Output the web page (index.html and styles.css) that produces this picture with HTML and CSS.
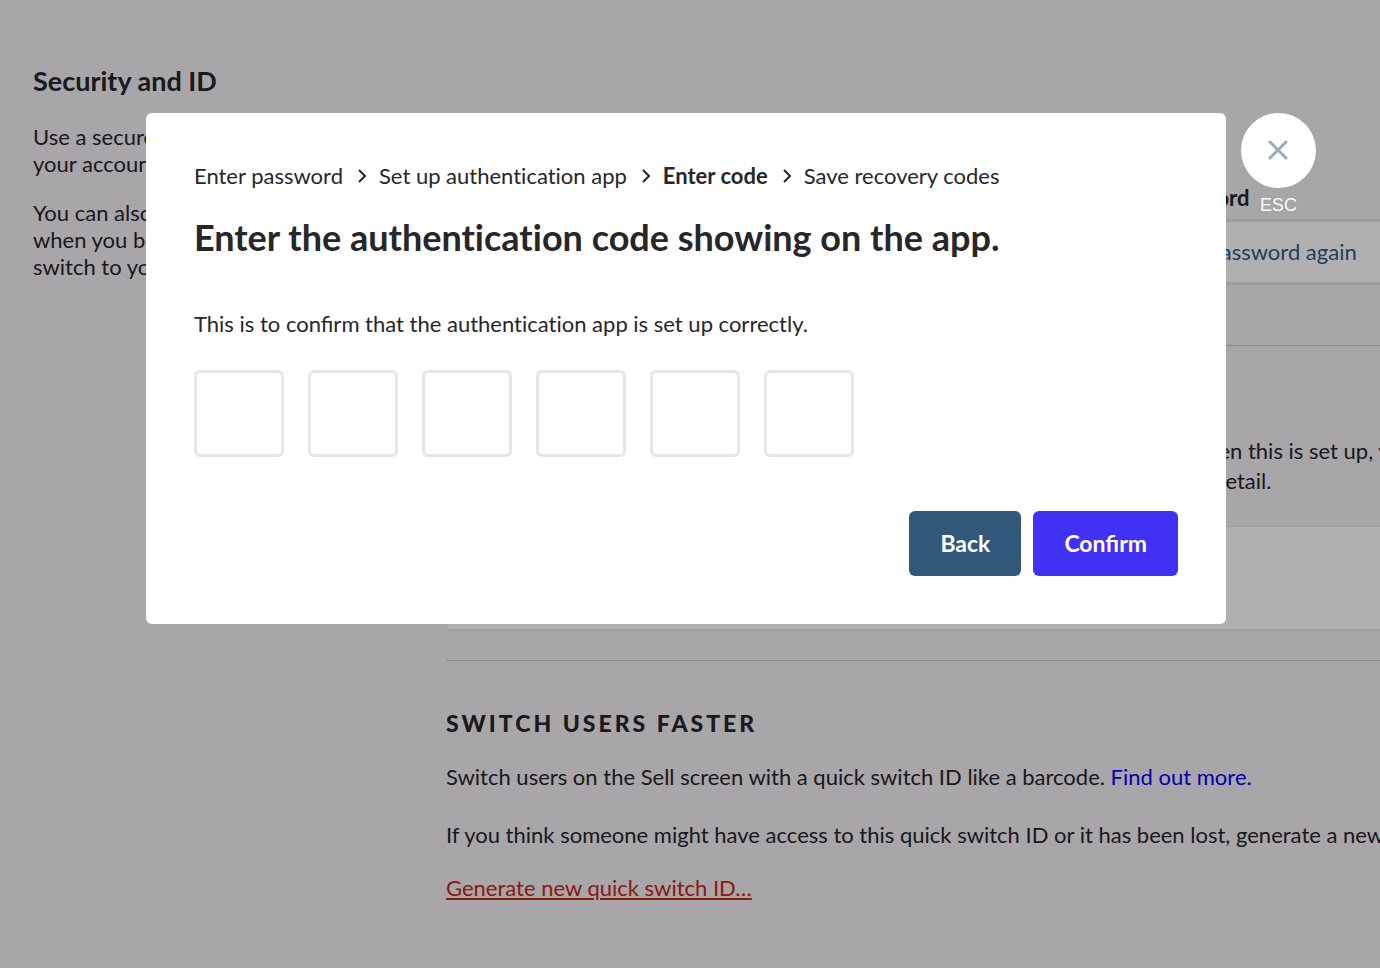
FILE: index.html
```html
<!DOCTYPE html>
<html lang="en">
<head>
<meta charset="utf-8">
<title>Security and ID</title>
<link rel="stylesheet" href="styles.css">
</head>
<body>
<main class="page">
  <section class="intro">
    <h2 class="intro-title">Security and ID</h2>
    <p class="intro-text">Use a secure<br>your account</p>
    <p class="intro-text">You can also<br>when you begin<br>switch to your</p>
  </section>
  <div class="settings">
    <section class="passwords">
      <div class="field">
        <label class="field-label" for="repeat">Repeat password</label>
        <input class="field-input" id="repeat" type="password" placeholder="Enter new password again">
      </div>
    </section>
    <section class="two-factor">
      <p class="text">Protect your user account by adding two-factor authentication to your login. When this is set up, you will be<br>asked for a code each time you log in. Visit our help centre guide to see more in detail.</p>
      <div class="panel"></div>
    </section>
    <section class="switching">
      <h3 class="section-title">Switch users faster</h3>
      <p class="text">Switch users on the Sell screen with a quick switch ID like a barcode. <a class="link" href="#">Find out more.</a></p>
      <p class="text text-spaced">If you think someone might have access to this quick switch ID or it has been lost, generate a new one.</p>
      <a class="danger-link" href="#">Generate new quick switch ID…</a>
    </section>
  </div>
</main>
<div class="overlay">
  <div class="modal" role="dialog" aria-modal="true" aria-labelledby="modal-title">
    <ol class="steps">
      <li class="step">Enter password</li>
      <li class="step"><svg class="chevron" viewBox="0 0 8 14"><path d="M1 1l6 6-6 6"/></svg>Set up authentication app</li>
      <li class="step step-current" aria-current="step"><svg class="chevron" viewBox="0 0 8 14"><path d="M1 1l6 6-6 6"/></svg>Enter code</li>
      <li class="step"><svg class="chevron" viewBox="0 0 8 14"><path d="M1 1l6 6-6 6"/></svg>Save recovery codes</li>
    </ol>
    <h1 class="modal-title" id="modal-title">Enter the authentication code showing on the app.</h1>
    <p class="modal-text">This is to confirm that the <span class="no-ligatures">authentication</span> app is set up correctly.</p>
    <div class="code">
      <input class="digit" aria-label="Digit 1" maxlength="1" inputmode="numeric">
      <input class="digit" aria-label="Digit 2" maxlength="1" inputmode="numeric">
      <input class="digit" aria-label="Digit 3" maxlength="1" inputmode="numeric">
      <input class="digit" aria-label="Digit 4" maxlength="1" inputmode="numeric">
      <input class="digit" aria-label="Digit 5" maxlength="1" inputmode="numeric">
      <input class="digit" aria-label="Digit 6" maxlength="1" inputmode="numeric">
    </div>
    <div class="actions">
      <button class="button button-back" type="button">Back</button>
      <button class="button button-confirm" type="button">Confirm</button>
    </div>
    <div class="close">
      <button class="close-button" type="button" aria-labelledby="close-label"><svg class="close-icon" viewBox="0 0 20 20"><path d="M2 2l16 16M18 2L2 18"/></svg></button>
      <span class="close-label" id="close-label">ESC</span>
    </div>
  </div>
</div>
</body>
</html>
```

FILE: styles.css
```css
* { box-sizing: border-box; }
body {
  margin: 0;
  height: 100vh;
  overflow: hidden;
  background: #f4f1f5;
  color: #27262b;
  font: 22px/30px Lato, sans-serif;
}
h1, h2, h3, p, ol { margin: 0; padding: 0; }

.page {
  display: grid;
  grid-template-columns: 380px 1240px;
  column-gap: 33px;
  padding: 64px 33px 0;
}
.intro-title { font-size: 27px; line-height: 34px; margin-bottom: 25px; }
.intro-text { line-height: 27px; margin-bottom: 22px; }

.passwords {
  display: grid;
  grid-template-columns: 1fr 1fr;
  column-gap: 32px;
  padding: 119px 0 60px;
  border-bottom: 1px solid #cac8cc;
}
.field { grid-column: 2; }
.field-label { display: block; font-weight: 700; margin-bottom: 6px; }
.field-input {
  display: block;
  width: 100%;
  height: 66px;
  padding: 0 20px 2px;
  border: 3px solid #e6e5e8;
  border-radius: 4px;
  background: #fff;
  font: inherit;
}
.field-input::placeholder { color: #305b84; opacity: 1; }

.two-factor { padding: 90px 0 30px; border-bottom: 1px solid #cac8cc; }
.panel { height: 104px; margin-top: 30px; border: 1px solid #e6e5e8; background: #fff; }

.switching { padding-top: 47px; }
.section-title {
  margin-bottom: 24px;
  font-size: 23px;
  font-weight: 900;
  letter-spacing: 3px;
  text-transform: uppercase;
}
.text { white-space: nowrap; }
.text-spaced { margin: 28px 0 23px; }
.link { color: #00f; text-decoration: none; }
.danger-link {
  color: #c9261a;
  text-decoration-thickness: 2px;
  text-underline-offset: 2px;
}

.overlay {
  position: fixed;
  inset: 0;
  display: flex;
  justify-content: center;
  align-items: flex-start;
  padding: 113px 8px 0 0;
  background: rgba(0, 0, 0, 0.31);
}
.modal {
  position: relative;
  width: 1080px;
  padding: 48px;
  border-radius: 6px;
  background: #fff;
}
.steps, .modal-title, .no-ligatures { font-variant-ligatures: none; }
.steps { display: flex; gap: 15px; list-style: none; }
.step { display: flex; align-items: center; gap: 13px; }
.step-current { font-weight: 700; }
.chevron {
  width: 8px;
  height: 14px;
  fill: none;
  stroke: #27262b;
  stroke-width: 2;
}
.modal-title { margin-top: 23px; font-size: 36px; line-height: 46px; }
.modal-text { margin-top: 49px; }
.code { display: flex; gap: 24px; margin-top: 31px; }
.digit {
  width: 90px;
  height: 87px;
  border: 3px solid #e6e6e8;
  border-radius: 6px;
  background: #fff;
  font: inherit;
  text-align: center;
}
.actions { display: flex; justify-content: flex-end; gap: 12px; margin-top: 54px; }
.button {
  height: 65px;
  padding: 0 31px 2px;
  border: 0;
  border-radius: 6px;
  color: #fff;
  font: inherit;
  font-size: 23px;
  font-weight: 700;
}
.button-back { background: #31587b; }
.button-confirm { background: #4131f5; }
.close {
  position: absolute;
  top: 0;
  left: 100%;
  display: flex;
  flex-direction: column;
  align-items: center;
  margin-left: 15px;
}
.close-button {
  display: grid;
  place-items: center;
  width: 75px;
  height: 75px;
  padding: 0 1px 1px 0;
  border: 0;
  border-radius: 50%;
  background: #fff;
}
.close-icon {
  width: 20px;
  height: 20px;
  fill: none;
  stroke: #9aaabd;
  stroke-width: 3;
  stroke-linecap: round;
}
.close-label { margin-top: 6px; color: #fff; font: 18px/22px "Liberation Sans", sans-serif; }
```
